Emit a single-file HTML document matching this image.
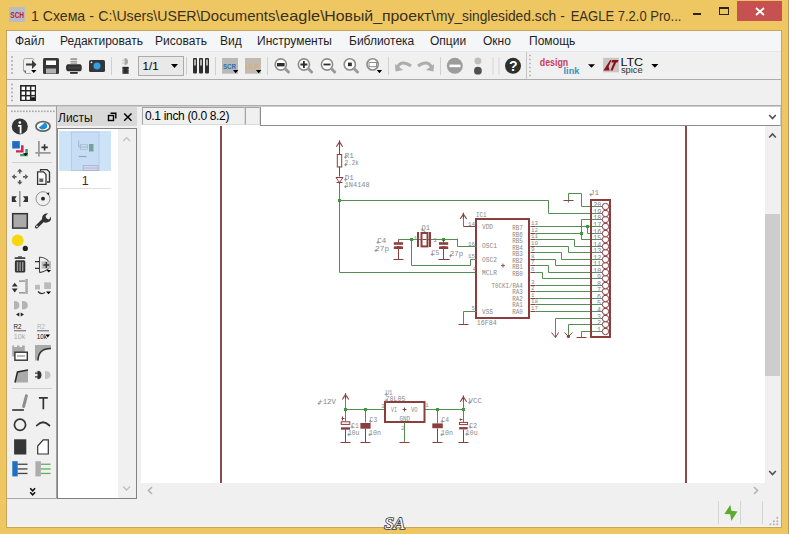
<!DOCTYPE html>
<html><head><meta charset="utf-8">
<style>
*{margin:0;padding:0;box-sizing:border-box}
html,body{width:789px;height:534px;overflow:hidden}
body{position:relative;background:#efc762;font-family:"Liberation Sans",sans-serif;color:#000}
.a{position:absolute}
#title{left:32px;top:6.7px;font-size:15px;color:#3a3020;white-space:nowrap;letter-spacing:-0.32px}
#menu{left:7px;top:31px;width:774px;height:21px;background:#f5f6f7;border-bottom:1px solid #e6e7e8}
.mi{position:absolute;font-size:12px;color:#1e1e1e;white-space:nowrap}
#tb1{left:7px;top:52px;width:774px;height:28px;background:#f0f0f0;border-bottom:1px solid #acacac}
#tb2{left:7px;top:80px;width:774px;height:26px;background:#f0f0f0;border-bottom:1px solid #acacac}
#main{left:7px;top:106px;width:774px;height:421px;background:#f0f0f0}
</style></head>
<body>
<div class="a" style="left:6px;top:30px;width:776px;height:498px;background:#c9a55a"></div>
<div class="a" id="menu">
</div>
<div class="a" id="tb1"></div>
<div class="a" id="tb2"></div>
<div class="a" id="main"></div>
<svg class="a" style="left:0;top:0" width="789" height="34" id="titlesvg"><text x="30.9" y="20.7" font-size="15" font-family="Liberation Sans" fill="#3a3020" textLength="66.9" lengthAdjust="spacingAndGlyphs" xml:space="preserve">1 Схема - </text><text x="98.3" y="20.7" font-size="15" font-family="Liberation Sans" fill="#3a3020" textLength="102.2" lengthAdjust="spacingAndGlyphs" xml:space="preserve">C:\Users\USER\</text><text x="200.1" y="20.7" font-size="15" font-family="Liberation Sans" fill="#3a3020" textLength="79.5" lengthAdjust="spacingAndGlyphs" xml:space="preserve">Documents\</text><text x="280.1" y="20.7" font-size="15" font-family="Liberation Sans" fill="#3a3020" textLength="44.6" lengthAdjust="spacingAndGlyphs" xml:space="preserve">eagle\</text><text x="324.2" y="20.7" font-size="15" font-family="Liberation Sans" fill="#3a3020" textLength="111.6" lengthAdjust="spacingAndGlyphs" xml:space="preserve">Новый_проект\</text><text x="436.1" y="20.7" font-size="15" font-family="Liberation Sans" fill="#3a3020" textLength="123.9" lengthAdjust="spacingAndGlyphs" xml:space="preserve">my_singlesided.sch </text><text x="560.3" y="20.7" font-size="15" font-family="Liberation Sans" fill="#3a3020" textLength="4.6" lengthAdjust="spacingAndGlyphs" xml:space="preserve">-</text><text x="570.7" y="20.7" font-size="15" font-family="Liberation Sans" fill="#3a3020" textLength="110.7" lengthAdjust="spacingAndGlyphs" xml:space="preserve">EAGLE 7.2.0 Pro...</text></svg>
<div class="a mi" style="left:15px;top:34px">Файл</div>
<div class="a mi" style="left:60px;top:34px">Редактировать</div>
<div class="a mi" style="left:155px;top:34px">Рисовать</div>
<div class="a mi" style="left:220px;top:34px">Вид</div>
<div class="a mi" style="left:257px;top:34px">Инструменты</div>
<div class="a mi" style="left:349px;top:34px">Библиотека</div>
<div class="a mi" style="left:430px;top:34px">Опции</div>
<div class="a mi" style="left:483px;top:34px">Окно</div>
<div class="a mi" style="left:529px;top:34px">Помощь</div>
<!-- sheets panel -->
<div class="a" style="left:57px;top:107px;width:80px;height:19px;background:#d9d9d9"></div>
<div class="a" style="left:58px;top:111px;font-size:12px;color:#111">Листы</div>
<div class="a" style="left:57px;top:128px;width:80px;height:371px;background:#fff;border:1px solid #828282"></div>
<div class="a" style="left:118px;top:129px;width:18px;height:369px;background:#f0f0f0"></div>
<!-- canvas -->
<div class="a" style="left:141px;top:125px;width:624px;height:358px;background:#fff"></div>
<!-- coord box -->
<div class="a" style="left:142px;top:107px;width:103px;height:18px;background:#f0f0f0;border:1px solid;border-color:#a4a4a4 #dcdcdc #dcdcdc #a4a4a4"></div>
<div class="a" style="left:145px;top:109px;font-size:12px;color:#000;letter-spacing:-0.33px">0.1 inch (0.0 8.2)</div>
<div class="a" style="left:245px;top:107px;width:15px;height:18px;background:#f0f0f0;border:1px solid;border-color:#a4a4a4 #dcdcdc #dcdcdc #a4a4a4"></div>
<div class="a" style="left:260px;top:106px;width:521px;height:20px;background:#fff;border:1px solid #8c8c8c;border-right:1px solid #d0d0d0"></div>


<svg class="a" style="left:0;top:0" width="789" height="534" viewBox="0 0 789 534">
<!-- title icon -->
<rect x="9" y="7" width="16" height="15" fill="#b9bcc3"/>
<text x="10.3" y="17.6" font-size="8.2" font-family="Liberation Sans" fill="#b8213c" textLength="13.8" lengthAdjust="spacingAndGlyphs" font-weight="bold">SCH</text>
<!-- window buttons -->
<rect x="693" y="13" width="8" height="2" fill="#2a2410"/>
<rect x="719.5" y="7.5" width="9" height="7" fill="none" stroke="#2a2410" stroke-width="1"/>
<rect x="719" y="7" width="10" height="2" fill="#2a2410"/>
<rect x="737" y="1" width="45" height="20" fill="#c75050"/>
<rect x="788" y="0" width="1" height="534" fill="#c49a48"/>
<path d="M756 8 L764 15 M764 8 L756 15" stroke="#fff" stroke-width="1.8"/>
<!-- grips -->
<g fill="#a0a0a0"><rect x="529.3" y="54.8" width="1.4" height="1.4"/><rect x="529.3" y="58.8" width="1.4" height="1.4"/><rect x="529.3" y="62.8" width="1.4" height="1.4"/><rect x="529.3" y="66.8" width="1.4" height="1.4"/><rect x="529.3" y="70.8" width="1.4" height="1.4"/><rect x="529.3" y="74.8" width="1.4" height="1.4"/><rect x="11.2" y="56.2" width="1.6" height="1.6"/><rect x="11.2" y="60.2" width="1.6" height="1.6"/><rect x="11.2" y="64.2" width="1.6" height="1.6"/><rect x="11.2" y="68.2" width="1.6" height="1.6"/><rect x="11.2" y="72.2" width="1.6" height="1.6"/><rect x="11.2" y="83.6" width="1.6" height="1.6"/><rect x="11.2" y="87.6" width="1.6" height="1.6"/><rect x="11.2" y="91.6" width="1.6" height="1.6"/><rect x="11.2" y="95.6" width="1.6" height="1.6"/><rect x="11.2" y="99.6" width="1.6" height="1.6"/></g>
<!-- export icon -->
<path d="M23.5 60.5 Q23.5 58.5 25.5 58.5 L32 58.5 Q34 58.5 34 60.5 M23.5 60.5 L23.5 71 L26 73.5 L31 73.5" fill="none" stroke="#a8a8a8" stroke-width="1"/>
<path d="M23.5 70.5 L26 73.5 L26 70.5 Z" fill="#666"/>
<path d="M26 63.5 L32 63.5 L32 60 L36.5 64.5 L32 69 L32 65.5 L26 65.5 Z" fill="#3a3a3a"/>
<path d="M31 70 L36.5 70 L33.75 73 Z" fill="#000"/>
<!-- save -->
<path d="M43 59.5 Q43 58 44.5 58 L57.5 58 Q59 58 59 59.5 L59 72.5 Q59 74 57.5 74 L44.5 74 Q43 74 43 72.5 Z" fill="#363636"/>
<rect x="46" y="60.5" width="10" height="4.5" fill="#fff"/>
<rect x="46" y="68.5" width="10" height="5" fill="#b0b0b0"/>
<!-- print -->
<rect x="70.5" y="58.3" width="6.6" height="1.5" fill="#8a8a8a"/>
<rect x="70.5" y="60.8" width="6.6" height="1.3" fill="#a0a0a0"/>
<rect x="70.5" y="62.6" width="6.6" height="1.1" fill="#8a8a8a"/>
<path d="M68 64.2 L80 64.2 Q81.8 64.5 81.8 67.7 Q81.8 71 80 71.3 L68 71.3 Q66 71 66 67.7 Q66 64.5 68 64.2 Z" fill="#2f2f2f"/>
<rect x="67.5" y="66.3" width="13" height="2.8" fill="#3e3e3e"/>
<rect x="70.1" y="72" width="7.6" height="1.8" fill="#2a2a2a"/>
<!-- camera -->
<rect x="89" y="60" width="16" height="12" rx="1.5" fill="#363636"/>
<circle cx="97" cy="66" r="4.2" fill="#1d5a80"/><circle cx="97" cy="66" r="3.3" fill="#3aa0dc"/>
<circle cx="91.5" cy="62.3" r="0.9" fill="#fff"/>
<!-- sep -->
<rect x="111" y="57" width="1" height="18" fill="#d0d0d0"/>
<!-- plug icon -->
<path d="M124.5 58 A3.5 3.5 0 0 1 124.5 65 Z" fill="#a8a8a8"/>
<rect x="122.2" y="59.6" width="2.6" height="1.2" fill="#c8c8c8"/><rect x="122.2" y="62.4" width="2.6" height="1.2" fill="#c8c8c8"/>
<rect x="122.4" y="66.8" width="6.3" height="7" fill="#2c2c2c"/>
<rect x="122.4" y="69.2" width="1" height="0.9" fill="#bbb"/><rect x="127.7" y="69.2" width="1" height="0.9" fill="#bbb"/>
<rect x="122.4" y="71.6" width="1" height="0.9" fill="#bbb"/><rect x="127.7" y="71.6" width="1" height="0.9" fill="#bbb"/>
<!-- combo -->
<rect x="138.5" y="56.5" width="45" height="19" fill="#e9e9e9" stroke="#acacac"/>
<text x="142.6" y="69.8" font-size="11.5" font-family="Liberation Sans" fill="#000">1/1</text>
<path d="M171 64 L178 64 L174.5 68 Z" fill="#000"/>
<rect x="186" y="57" width="1" height="18" fill="#d0d0d0"/>
<!-- 3 bars -->
<g fill="#2e2e2e">
<rect x="193" y="58" width="4" height="15.5" rx="1"/><rect x="199" y="58" width="4" height="15.5" rx="1"/><rect x="205" y="58" width="4" height="15.5" rx="1"/>
</g>
<g fill="#e8e8e8"><rect x="194.3" y="59.5" width="1.4" height="6"/><rect x="200.3" y="59.5" width="1.4" height="6"/><rect x="206.3" y="59.5" width="1.4" height="6"/></g>
<rect x="215" y="57" width="1" height="18" fill="#d0d0d0"/>
<!-- SCR -->
<rect x="222" y="58" width="16" height="15.7" fill="#b9b9b9"/>
<text x="223" y="68.8" font-size="7.6" font-weight="bold" font-family="Liberation Sans" fill="#2a6fae" textLength="13" lengthAdjust="spacingAndGlyphs">SCR</text>
<path d="M233 70 L238.3 70 L235.65 73.3 Z" fill="#000"/>
<!-- ULP -->
<rect x="245" y="58" width="16" height="15.7" fill="#c0bab0"/>
<text x="246" y="68.8" font-size="7.6" font-family="Liberation Sans" fill="#f2aa48" textLength="13" lengthAdjust="spacingAndGlyphs" opacity="0.8">ULP</text>
<path d="M256 70 L261.3 70 L258.65 73.3 Z" fill="#000"/>
<rect x="267" y="57" width="1" height="18" fill="#d0d0d0"/>
<!-- zooms -->
<g fill="none" stroke="#8c8c8c" stroke-width="1.6">
<circle cx="280.8" cy="64.5" r="5.6" fill="#fff"/><circle cx="303.9" cy="64.5" r="5.6" fill="#fff"/><circle cx="327" cy="64.5" r="5.6" fill="#fff"/><circle cx="349.8" cy="64.4" r="5.6" fill="#fff"/><circle cx="372.6" cy="64.4" r="5.6" fill="#fff"/>
</g>
<g stroke="#9a9a9a" stroke-width="3" stroke-linecap="round">
<path d="M285.5 69 L288.5 72"/><path d="M308.6 69 L311.6 72"/><path d="M331.7 69 L334.7 72"/><path d="M354.5 69 L357.5 72"/>
</g>
<rect x="277" y="63" width="7.6" height="3.4" fill="#2e2e2e"/>
<path d="M303.9 61 L303.9 68 M300.4 64.5 L307.4 64.5" stroke="#2e2e2e" stroke-width="1.8"/>
<path d="M323.5 64.5 L330.5 64.5" stroke="#2e2e2e" stroke-width="1.8"/>
<rect x="348" y="62.6" width="3.8" height="3.6" fill="#2e2e2e"/>
<rect x="369" y="62.5" width="7.5" height="4.2" fill="none" stroke="#8c8c8c" stroke-width="1"/>
<path d="M376.8 70 L382.1 70 L379.45 73.3 Z" fill="#000"/>
<rect x="388" y="57" width="1" height="18" fill="#d0d0d0"/>
<!-- undo redo -->
<path d="M397 68 Q401 59 411 66" fill="none" stroke="#adadad" stroke-width="3"/>
<path d="M395 64 L395.5 71.5 L403 70 Z" fill="#adadad"/>
<path d="M432 68 Q428 59 418 66" fill="none" stroke="#adadad" stroke-width="3"/>
<path d="M434 64 L433.5 71.5 L426 70 Z" fill="#adadad"/>
<rect x="440" y="57" width="1" height="18" fill="#d0d0d0"/>
<!-- stop go -->
<circle cx="454.8" cy="65.8" r="8" fill="#9c9c9c"/>
<rect x="449.5" y="64.6" width="11" height="2.6" fill="#fff"/>
<circle cx="477.9" cy="61" r="3.4" fill="#bdbdbd"/>
<circle cx="477.9" cy="70.7" r="3.9" fill="#505050"/>
<rect x="492.5" y="57" width="1" height="18" fill="#d6d6d6"/>
<rect x="498.5" y="57" width="1" height="18" fill="#d6d6d6"/>
<!-- help -->
<circle cx="513" cy="65.8" r="8" fill="#2e2e2e"/>
<text x="513.2" y="71" font-size="14" font-weight="bold" font-family="Liberation Sans" fill="#fff" text-anchor="middle">?</text>
<rect x="526" y="52" width="1" height="27" fill="#c4c4c4"/>
<!-- design link -->
<text x="539.8" y="65.7" font-size="10.5" font-weight="bold" font-family="Liberation Sans" fill="#c83a62" textLength="28.4" lengthAdjust="spacingAndGlyphs">design</text>
<text x="563.6" y="73.8" font-size="9.5" font-weight="bold" font-family="Liberation Sans" fill="#3592bd" textLength="15.7" lengthAdjust="spacingAndGlyphs">link</text>
<path d="M588 64.2 L595 64.2 L591.5 67.8 Z" fill="#000"/>
<!-- LTC -->
<rect x="603.1" y="57.8" width="15.8" height="14.5" fill="#c9c5c5"/>
<path d="M603.4 70.6 L610.2 60 L611.6 60 L608.6 66.5 L609.6 70.6 Z" fill="#8c1119"/><path d="M612.2 59.9 L618.6 59.9 L617.6 62.5 L616.2 62.5 L612.6 70.6 L610.4 70.6 L613.8 62.5 L611.4 62.5 Z" fill="#8c1119"/>
<text x="620.4" y="65.8" font-size="11.2" font-family="Liberation Sans" fill="#111" textLength="22.8" lengthAdjust="spacingAndGlyphs">LTC</text>
<text x="620.9" y="72.6" font-size="8.5" font-family="Liberation Sans" fill="#333" textLength="21.8" lengthAdjust="spacingAndGlyphs">spice</text>
<path d="M651.3 64 L658.4 64 L654.85 67.7 Z" fill="#000"/>
<!-- grid icon tb2 -->
<rect x="20" y="85" width="16" height="16" fill="#262626"/>
<path d="M31 97.2 L35.4 97.2 L33.6 99.5 Z" fill="#000"/>
<g fill="#fff">
<rect x="21.6" y="86.6" width="3.4" height="3.4"/><rect x="26.5" y="86.6" width="3.4" height="3.4"/><rect x="31.4" y="86.6" width="3.4" height="3.4"/>
<rect x="21.6" y="91.5" width="3.4" height="3.4"/><rect x="26.5" y="91.5" width="3.4" height="3.4"/><rect x="31.4" y="91.5" width="3.4" height="3.4"/>
<rect x="21.6" y="96.4" width="3.4" height="3.4"/><rect x="26.5" y="96.4" width="3.4" height="3.4"/><rect x="31.4" y="96.4" width="3.4" height="0.9"/>
</g>
</svg>

<svg class="a" style="left:0;top:0" width="789" height="534" viewBox="0 0 789 534">
<rect x="7" y="106" width="774" height="1" fill="#cdcdcd"/>
<!-- left panel border -->
<rect x="56" y="106" width="1" height="393" fill="#a0a0a0"/>
<rect x="7" y="498" width="50" height="1" fill="#a8a8a8"/>
<!-- left toolbar grip -->
<g fill="#a6a6a6"><rect x="11" y="110.5" width="1.6" height="1.6"/><rect x="14" y="110.5" width="1.6" height="1.6"/><rect x="17" y="110.5" width="1.6" height="1.6"/><rect x="20" y="110.5" width="1.6" height="1.6"/><rect x="23" y="110.5" width="1.6" height="1.6"/><rect x="26" y="110.5" width="1.6" height="1.6"/><rect x="29" y="110.5" width="1.6" height="1.6"/><rect x="32" y="110.5" width="1.6" height="1.6"/><rect x="35" y="110.5" width="1.6" height="1.6"/><rect x="38" y="110.5" width="1.6" height="1.6"/><rect x="41" y="110.5" width="1.6" height="1.6"/><rect x="44" y="110.5" width="1.6" height="1.6"/><rect x="47" y="110.5" width="1.6" height="1.6"/><rect x="50" y="110.5" width="1.6" height="1.6"/><rect x="53" y="110.5" width="1.6" height="1.6"/></g>
<!-- sheets header icons -->
<rect x="108.5" y="115.5" width="5" height="5" fill="none" stroke="#000" stroke-width="1.4"/>
<path d="M110.5 113.2 L115.8 113.2 L115.8 118.5" fill="none" stroke="#000" stroke-width="1.4"/>
<path d="M124.2 113.5 L131.5 120.8 M131.5 113.5 L124.2 120.8" stroke="#000" stroke-width="1.5"/>
<!-- thumbnail -->
<rect x="59" y="131" width="52" height="40" fill="#cce3f8"/>
<rect x="71.5" y="132" width="27.5" height="38.7" fill="#c6ddf5" stroke="#a9c3de" stroke-width="0.7"/>
<path d="M78.7 140.5 L78.7 147 L88 147" stroke="#8aa8b0" stroke-width="0.7" fill="none"/>
<rect x="80.5" y="144.5" width="7" height="5" fill="none" stroke="#a0b8c0" stroke-width="0.6"/>
<rect x="89" y="144" width="4.5" height="7.5" fill="#7aa09a"/>
<path d="M78.7 156.5 L86.5 156.5" stroke="#90a8b0" stroke-width="1.2"/>
<rect x="83.2" y="165.5" width="14.8" height="5" fill="none" stroke="#b8a8c0" stroke-width="0.8"/>
<path d="M83.2 168 L98 168" stroke="#c0a8c8" stroke-width="0.8"/>
<text x="85.3" y="185" font-size="12.5" font-family="Liberation Sans" fill="#5a1d1d" text-anchor="middle">1</text>
<rect x="59" y="188" width="52" height="1" fill="#e0e0e0"/>
<path d="M123.2 141 L126.6 137.6 L130 141" fill="none" stroke="#c0c0c0" stroke-width="1.3"/>
<path d="M123.2 486.5 L126.6 490 L130 486.5" fill="none" stroke="#c0c0c0" stroke-width="1.3"/>
<!-- canvas frame lines -->
<rect x="220" y="126" width="2" height="357" fill="#8c4a4a"/>
<rect x="685" y="126" width="2" height="357" fill="#8c4a4a"/>
<!-- vscroll -->
<rect x="765" y="126" width="15" height="357" fill="#f0f0f0"/>
<rect x="765" y="214" width="15" height="162" fill="#cdcdcd"/>
<path d="M769.2 137.5 L772.5 134 L775.8 137.5" fill="none" stroke="#505050" stroke-width="1.6"/>
<path d="M769.2 471 L772.5 474.5 L775.8 471" fill="none" stroke="#505050" stroke-width="1.6"/>
<path d="M769.2 115 L772.5 118.5 L775.8 115" fill="none" stroke="#505050" stroke-width="1.6"/>
<!-- hscroll -->
<path d="M152 487 L148.5 490.5 L152 494" fill="none" stroke="#b4b4b4" stroke-width="1.6"/>
<path d="M754 487 L757.5 490.5 L754 494" fill="none" stroke="#b4b4b4" stroke-width="1.6"/>
<!-- status bar -->
<rect x="718" y="501" width="1" height="23" fill="#d4d4d4"/>
<rect x="740" y="501" width="1" height="23" fill="#d4d4d4"/>
<rect x="762" y="501" width="1" height="23" fill="#d4d4d4"/>
<path d="M730.3 504.8 L724.4 514.1 L730.2 514.3 L731.3 521 L737.4 511.4 L731.4 510.8 Z" fill="#5cab30"/>
<g fill="#a8a8a8"><rect x="776.5" y="517" width="1.6" height="1.6"/><rect x="773" y="520.5" width="1.6" height="1.6"/><rect x="776.5" y="520.5" width="1.6" height="1.6"/><rect x="769.5" y="523.5" width="1.6" height="1.6"/><rect x="773" y="523.5" width="1.6" height="1.6"/><rect x="776.5" y="523.5" width="1.6" height="1.6"/></g>
<rect x="7" y="526" width="774" height="1" fill="#f8f4ea"/>
</svg>


<svg class="a" style="left:0;top:0" width="789" height="534" viewBox="0 0 789 534">
<!-- info -->
<circle cx="19.8" cy="126.4" r="8" fill="#333"/>
<circle cx="19.8" cy="122.6" r="1.3" fill="#fff"/>
<path d="M18 125.8 L20.6 125.8 L20.6 133.5" stroke="#fff" stroke-width="1.8" fill="none"/>
<!-- eye -->
<ellipse cx="43" cy="126.4" rx="7" ry="4.7" fill="#fff" stroke="#666" stroke-width="1.8"/>
<path d="M38.8 127 Q40.5 126.5 42 125 Q43.5 123 45.5 122.8 Q48 124.5 47 127.5 Q44.5 130.2 41 129.3 Q39.2 128.6 38.8 127 Z" fill="#1c8fd8"/>
<!-- layers -->
<rect x="12.2" y="141.1" width="7.6" height="7.4" fill="#1e6bc0"/>
<path d="M21 145.3 L23.6 145.3 L23.6 152.5 L16 152.5 L16 150.3 L21 150.3 Z" fill="#d0245a"/>
<path d="M25.3 149 L27.8 149 L27.8 156.3 L20.2 156.3 L20.2 154 L25.3 154 Z" fill="#3a9a6a"/>
<path d="M23 153.2 L28 153.2 L25.5 156 Z" fill="#000"/>
<!-- mark -->
<rect x="38" y="141" width="1.8" height="15.5" fill="#999"/>
<rect x="35.4" y="152" width="15.2" height="1.8" fill="#999"/>
<path d="M44.6 144.2 L44.6 150.6 M41.4 147.4 L47.8 147.4" stroke="#333" stroke-width="1.6"/>
<!-- sep -->
<rect x="12" y="162" width="40" height="1" fill="#d0d0d0"/>
<!-- move -->
<g fill="#555">
<path d="M19.8 168.8 L22.5 171.8 L17.1 171.8 Z M19.8 184.8 L22.5 181.8 L17.1 181.8 Z M11.8 176.8 L14.8 174.1 L14.8 179.5 Z M28.2 176.8 L25.2 174.1 L25.2 179.5 Z"/>
<rect x="19" y="171.5" width="1.6" height="2"/><rect x="19" y="180" width="1.6" height="2"/><rect x="14.5" y="176" width="2" height="1.6"/><rect x="23" y="176" width="2" height="1.6"/>
</g>
<!-- copy -->
<path d="M40.5 171 L40.5 169.6 L47 169.6 L49.5 172 L49.5 182 L47 182" fill="none" stroke="#333" stroke-width="1.3"/>
<path d="M37.6 171.9 L43.5 171.9 L46 174.4 L46 184.3 L37.6 184.3 Z" fill="#fff" stroke="#333" stroke-width="1.3"/>
<rect x="39.3" y="178.5" width="4" height="3.6" fill="#666"/>
<!-- mirror -->
<rect x="19" y="191" width="1.6" height="15.8" fill="#999"/>
<path d="M11.8 196.2 L16.8 196.2 L14.8 199.1 L16.8 202 L11.8 202 Z" fill="#333"/>
<path d="M28 196.2 L23 196.2 L25 199.1 L23 202 L28 202 Z" fill="#333"/>
<!-- rotate -->
<circle cx="43" cy="198.7" r="7" fill="none" stroke="#888" stroke-width="0.9"/>
<circle cx="43" cy="198.7" r="1.9" fill="#222"/>
<path d="M46.5 193 L49.5 192.5 L48.5 195.5 Z" fill="#222"/>
<!-- change -->
<rect x="12.7" y="213.7" width="14.6" height="14.4" fill="#aaa" stroke="#333" stroke-width="1.5"/>
<!-- wrench -->
<path d="M36.5 226.8 L44 219.5" stroke="#333" stroke-width="3.2" stroke-linecap="round"/>
<path d="M42.5 221 Q41 216 44.5 214 Q46.5 213 48 213.2 L45.5 216 L46.5 218.5 L49 219.5 L51 216.5 Q51.5 220 49.5 221.5 Q47 223 44.5 222.5 Z" fill="#333"/>
<circle cx="37" cy="226.4" r="0.8" fill="#fff"/>
<!-- yellow -->
<circle cx="17.7" cy="240.4" r="5.9" fill="#f6d60c"/>
<circle cx="25.3" cy="248.4" r="2.6" fill="#222"/>
<!-- trash -->
<rect x="14.7" y="257.2" width="10.6" height="1.8" fill="#444"/>
<rect x="18" y="256.3" width="4" height="1.2" fill="#444"/>
<rect x="14.9" y="260.2" width="10.4" height="12.4" rx="1.5" fill="#333"/>
<rect x="16.8" y="262" width="1.4" height="9" fill="#999"/><rect x="19.4" y="262" width="1.4" height="9" fill="#999"/><rect x="22" y="262" width="1.4" height="9" fill="#999"/>
<!-- add -->
<path d="M39.5 257 L39.5 272.6 M39.5 257 Q49 258 50 265" fill="none" stroke="#444" stroke-width="1.1"/>
<path d="M39.5 272.6 Q47 271 49 268" fill="none" stroke="#444" stroke-width="1.1"/>
<path d="M35 261.7 L39.5 261.7 M35 268.4 L39.5 268.4" stroke="#333" stroke-width="1.3"/>
<rect x="41.7" y="261.3" width="9.3" height="7.5" fill="#bbb"/>
<path d="M46.3 262 L46.3 268 M43.3 265 L49.3 265" stroke="#333" stroke-width="1.5"/>
<path d="M46.5 270 L51 270 L48.75 272.6 Z" fill="#000"/>
<!-- pinswap -->
<path d="M14.75 282.7 L17.7 286.5 L11.8 286.5 Z M14.75 292.5 L17.7 288.5 L11.8 288.5 Z" fill="#333"/>
<rect x="19" y="280.3" width="6" height="1.6" fill="#999"/><rect x="19" y="292" width="6" height="1.6" fill="#999"/>
<rect x="25.3" y="279" width="2.5" height="15" fill="#aaa"/>
<!-- gateswap2 -->
<rect x="35" y="284.8" width="5" height="4.7" fill="#bbb"/>
<rect x="44.2" y="282.3" width="6.8" height="6.7" fill="#bbb"/>
<path d="M38 291.5 Q41 295 45 292.5" fill="none" stroke="#333" stroke-width="1.2"/>
<path d="M46 291.5 L51 291.5 L48.5 294.3 Z" fill="#000"/>
<!-- gate swap light -->
<path d="M14 301 Q19.4 301 19.4 305.2 Q19.4 309.5 14 309.5 Z M22 301 Q27.8 301 27.8 305.2 Q27.8 309.5 22 309.5 Z" fill="#b4b4b4"/>
<path d="M19.3 312.4 L16 314.5 L19.3 316.6 Z M20.7 312.4 L24 314.5 L20.7 316.6 Z" fill="#222"/>
<!-- name/value -->
<text x="13.5" y="328.6" font-size="7" font-family="Liberation Sans" fill="#222" textLength="8" lengthAdjust="spacingAndGlyphs">R2</text>
<rect x="14" y="330" width="12" height="1.4" fill="#888"/>
<text x="13.8" y="338.6" font-size="7.5" font-family="Liberation Sans" fill="#aaa" textLength="11.5" lengthAdjust="spacingAndGlyphs">10k</text>
<text x="37" y="328.6" font-size="7" font-family="Liberation Sans" fill="#b0b0b0" textLength="8" lengthAdjust="spacingAndGlyphs">R2</text>
<rect x="37" y="330" width="12" height="1.4" fill="#888"/>
<text x="36.8" y="338.6" font-size="7.5" font-family="Liberation Sans" fill="#111" textLength="10" lengthAdjust="spacingAndGlyphs">10k</text>
<path d="M45.5 334.5 L50 334.5 L47.75 337.6 Z" fill="#000"/>
<!-- smash -->
<path d="M12.2 356.4 L12.2 345.5 L14 345.5 L14 347 L17 347 L17 345.5 L19.5 345.5 L19.5 347 L22 347 L22 345.5 L24.8 345.5 L24.8 356.4 Z" fill="#aaa"/>
<rect x="14.9" y="352.2" width="12.4" height="8" fill="#fff" stroke="#333" stroke-width="1.4"/>
<rect x="17" y="355" width="8" height="2" fill="#bbb"/>
<!-- miter -->
<path d="M35 345 L51 345 L51 348.5 Q38 348.5 38 360.6 L35 360.6 Z" fill="#aaa"/>
<path d="M38 360.6 Q38 348.5 51 348.5" fill="none" stroke="#333" stroke-width="1.5"/>
<!-- split -->
<path d="M15 382.5 L17.5 372 L28 370 L28 382.5 Z" fill="#aaa"/>
<path d="M15 382.5 L17.5 372 L28 370" fill="none" stroke="#2a2a2a" stroke-width="1.5"/>
<!-- optimize -->
<path d="M37.5 370.7 Q41.5 370.7 41.5 375 Q41.5 379.2 37.5 379.2 Z" fill="#333"/>
<rect x="35" y="372.5" width="3" height="1.2" fill="#333"/><rect x="35" y="376.3" width="3" height="1.2" fill="#333"/>
<path d="M45 371 Q50.5 371 50.5 375 Q50.5 379 45 379 Z" fill="#c4c4c4"/>
<!-- sep -->
<rect x="12" y="388" width="40" height="1" fill="#d0d0d0"/>
<!-- wire -->
<rect x="12.2" y="409.2" width="11.7" height="1.6" fill="#333"/>
<path d="M23.6 406.5 L26.4 395.8" stroke="#8e8e8e" stroke-width="3" stroke-linecap="round"/>
<!-- T -->
<path d="M38.9 397.8 L47.8 397.8 M43.35 397.8 L43.35 409.3" stroke="#333" stroke-width="1.7"/>
<!-- circle arc -->
<circle cx="20" cy="424.8" r="5.6" fill="none" stroke="#333" stroke-width="1.7"/>
<path d="M36.8 425.5 Q43 419 49.4 425.5" fill="none" stroke="#333" stroke-width="1.8" stroke-linecap="round"/>
<!-- rect polygon -->
<rect x="14.1" y="439.3" width="12.2" height="15.2" fill="#363636"/>
<path d="M37.7 454 L37.7 446 L43.2 439.8 L48.3 439.8 L48.3 454 Z" fill="#fff" stroke="#333" stroke-width="1.2"/>
<!-- bus net -->
<rect x="12.3" y="461.2" width="5.4" height="15.2" fill="#1e70c0"/>
<g fill="#444"><rect x="17.7" y="463.6" width="9.8" height="1.3"/><rect x="17.7" y="468.3" width="9.8" height="1.3"/><rect x="17.7" y="472.8" width="9.8" height="1.3"/></g>
<rect x="35.4" y="461.2" width="5.5" height="15.2" fill="#adadad"/>
<g fill="#5ab45a"><rect x="40.9" y="463.6" width="9.7" height="1.3"/><rect x="40.9" y="468.3" width="9.7" height="1.3"/><rect x="40.9" y="472.8" width="9.7" height="1.3"/></g>
<!-- chevron -->
<path d="M30.2 488.3 L32.65 490.8 L35.1 488.3 M30.2 492.3 L32.65 494.8 L35.1 492.3" fill="none" stroke="#111" stroke-width="1.6"/>
</svg>
<!--SCH--><svg class="a" style="left:0;top:0" width="789" height="534" viewBox="0 0 789 534">
<path d="M339.5 140.5 L341.3 144.0 L337.7 144.0 Z" fill="#8c3e3e"/>
<path d="M336.3 146.8 L338.3 143.7" fill="none" stroke="#8c3e3e" stroke-width="1.1"/>
<path d="M342.7 146.8 L340.7 143.7" fill="none" stroke="#8c3e3e" stroke-width="1.1"/>
<path d="M339.5 140.5 L339.5 147.0" fill="none" stroke="#8c3e3e" stroke-width="1.1"/>
<path d="M339.5 140.5 L339.5 154.5" fill="none" stroke="#8c3e3e" stroke-width="1"/>
<rect x="337.3" y="154.5" width="4.4" height="12.5" fill="none" stroke="#8c3e3e" stroke-width="1"/>
<path d="M339.5 166.5 L339.5 176.5" fill="none" stroke="#8c3e3e" stroke-width="1"/>
<path d="M336 177.5 L343 177.5 L339.5 182.5 Z" fill="none" stroke="#8c3e3e" stroke-width="1"/>
<path d="M336.5 182.5 L342.5 182.5" fill="none" stroke="#8c3e3e" stroke-width="1"/>
<path d="M339.5 182.5 L339.5 184.5" fill="none" stroke="#8c3e3e" stroke-width="1"/>
<path d="M344.0 157.3 L347.0 157.3 M345.5 155.8 L345.5 158.8" stroke="#9a9a9a" stroke-width="0.9"/>
<text x="344.7" y="157.8" font-size="6.5" font-family="Liberation Mono" fill="#888888" textLength="9" lengthAdjust="spacingAndGlyphs">R1</text>
<path d="M344.0 164.8 L347.0 164.8 M345.5 163.3 L345.5 166.3" stroke="#9a9a9a" stroke-width="0.9"/>
<text x="344.7" y="165.3" font-size="6.5" font-family="Liberation Mono" fill="#888888" textLength="14" lengthAdjust="spacingAndGlyphs">2.2k</text>
<path d="M344.0 179.7 L347.0 179.7 M345.5 178.2 L345.5 181.2" stroke="#9a9a9a" stroke-width="0.9"/>
<text x="344.7" y="180.2" font-size="6.5" font-family="Liberation Mono" fill="#888888" textLength="9" lengthAdjust="spacingAndGlyphs">D1</text>
<path d="M344.0 186.7 L347.0 186.7 M345.5 185.2 L345.5 188.2" stroke="#9a9a9a" stroke-width="0.9"/>
<text x="344.7" y="187.2" font-size="6.5" font-family="Liberation Mono" fill="#888888" textLength="25" lengthAdjust="spacingAndGlyphs">1N4148</text>
<path d="M339.5 184.5 L339.5 272.5 L476.5 272.5" fill="none" stroke="#558d55" stroke-width="1"/>
<rect x="338.0" y="199.0" width="3" height="3" fill="#3a9a3a"/>
<path d="M339.5 200.5 L548.5 200.5 L548.5 213.5 L602.5 213.5" fill="none" stroke="#558d55" stroke-width="1"/>
<rect x="476" y="219" width="53" height="99" fill="none" stroke="#8c3e3e" stroke-width="2"/>
<path d="M463.4 212.7 L465.2 216.2 L461.59999999999997 216.2 Z" fill="#8c3e3e"/>
<path d="M460.2 219.0 L462.2 215.89999999999998" fill="none" stroke="#8c3e3e" stroke-width="1.1"/>
<path d="M466.59999999999997 219.0 L464.59999999999997 215.89999999999998" fill="none" stroke="#8c3e3e" stroke-width="1.1"/>
<path d="M463.4 212.7 L463.4 219.2" fill="none" stroke="#8c3e3e" stroke-width="1.1"/>
<path d="M463.5 218.5 L463.5 226.5" fill="none" stroke="#558d55" stroke-width="1"/>
<path d="M463.5 226.5 L476.5 226.5" fill="none" stroke="#8c3e3e" stroke-width="1"/>
<text x="467.9" y="226.2" font-size="5.5" font-family="Liberation Mono" fill="#888888" textLength="7" lengthAdjust="spacingAndGlyphs">14</text>
<text x="476" y="217" font-size="6.5" font-family="Liberation Mono" fill="#888888" textLength="10.5" lengthAdjust="spacingAndGlyphs">IC1</text>
<text x="482" y="229.4" font-size="6.5" font-family="Liberation Mono" fill="#888888" textLength="11" lengthAdjust="spacingAndGlyphs">VDD</text>
<text x="482" y="248.3" font-size="6.5" font-family="Liberation Mono" fill="#888888" textLength="15" lengthAdjust="spacingAndGlyphs">OSC1</text>
<text x="482" y="261.5" font-size="6.5" font-family="Liberation Mono" fill="#888888" textLength="15" lengthAdjust="spacingAndGlyphs">OSC2</text>
<text x="482" y="274.6" font-size="6.5" font-family="Liberation Mono" fill="#888888" textLength="15" lengthAdjust="spacingAndGlyphs">MCLR</text>
<text x="482" y="314.4" font-size="6.5" font-family="Liberation Mono" fill="#888888" textLength="11" lengthAdjust="spacingAndGlyphs">VSS</text>
<text x="476.7" y="325" font-size="6.5" font-family="Liberation Mono" fill="#888888" textLength="20" lengthAdjust="spacingAndGlyphs">16F84</text>
<path d="M501 265.6 L505 265.6" fill="none" stroke="#8c3e3e" stroke-width="0.9"/>
<path d="M503 263.6 L503 267.6" fill="none" stroke="#8c3e3e" stroke-width="0.9"/>
<path d="M457.5 238.5 L457.5 246.5 L476.5 246.5" fill="none" stroke="#558d55" stroke-width="1"/>
<text x="467.9" y="245.8" font-size="5.5" font-family="Liberation Mono" fill="#888888" textLength="7" lengthAdjust="spacingAndGlyphs">16</text>
<path d="M411.5 265.5 L470.5 265.5 L470.5 259.5 L476.5 259.5" fill="none" stroke="#558d55" stroke-width="1"/>
<text x="467.9" y="257.6" font-size="5.5" font-family="Liberation Mono" fill="#888888" textLength="7" lengthAdjust="spacingAndGlyphs">15</text>
<text x="472.5" y="271.2" font-size="5.5" font-family="Liberation Mono" fill="#888888" textLength="3.5" lengthAdjust="spacingAndGlyphs">4</text>
<path d="M476.5 311.5 L463.5 311.5 L463.5 324.5" fill="none" stroke="#558d55" stroke-width="1"/>
<path d="M458.5 324.5 L468.5 324.5" fill="none" stroke="#8c3e3e" stroke-width="1"/>
<text x="471.5" y="310" font-size="5.5" font-family="Liberation Mono" fill="#888888" textLength="3.5" lengthAdjust="spacingAndGlyphs">5</text>
<text x="512.2" y="229.5" font-size="6.5" font-family="Liberation Mono" fill="#888888" textLength="10.6" lengthAdjust="spacingAndGlyphs">RB7</text>
<text x="531" y="225.2" font-size="5.5" font-family="Liberation Mono" fill="#888888" textLength="7" lengthAdjust="spacingAndGlyphs">13</text>
<text x="512.2" y="236.5" font-size="6.5" font-family="Liberation Mono" fill="#888888" textLength="10.6" lengthAdjust="spacingAndGlyphs">RB6</text>
<text x="531" y="232.2" font-size="5.5" font-family="Liberation Mono" fill="#888888" textLength="7" lengthAdjust="spacingAndGlyphs">12</text>
<text x="512.2" y="242.5" font-size="6.5" font-family="Liberation Mono" fill="#888888" textLength="10.6" lengthAdjust="spacingAndGlyphs">RB5</text>
<text x="531" y="238.2" font-size="5.5" font-family="Liberation Mono" fill="#888888" textLength="7" lengthAdjust="spacingAndGlyphs">11</text>
<text x="512.2" y="249.5" font-size="6.5" font-family="Liberation Mono" fill="#888888" textLength="10.6" lengthAdjust="spacingAndGlyphs">RB4</text>
<text x="531" y="245.2" font-size="5.5" font-family="Liberation Mono" fill="#888888" textLength="7" lengthAdjust="spacingAndGlyphs">10</text>
<text x="512.2" y="255.5" font-size="6.5" font-family="Liberation Mono" fill="#888888" textLength="10.6" lengthAdjust="spacingAndGlyphs">RB3</text>
<text x="531" y="251.2" font-size="5.5" font-family="Liberation Mono" fill="#888888" textLength="3.5" lengthAdjust="spacingAndGlyphs">9</text>
<text x="512.2" y="262.5" font-size="6.5" font-family="Liberation Mono" fill="#888888" textLength="10.6" lengthAdjust="spacingAndGlyphs">RB2</text>
<text x="531" y="258.2" font-size="5.5" font-family="Liberation Mono" fill="#888888" textLength="3.5" lengthAdjust="spacingAndGlyphs">8</text>
<text x="512.2" y="268.5" font-size="6.5" font-family="Liberation Mono" fill="#888888" textLength="10.6" lengthAdjust="spacingAndGlyphs">RB1</text>
<text x="531" y="264.2" font-size="5.5" font-family="Liberation Mono" fill="#888888" textLength="3.5" lengthAdjust="spacingAndGlyphs">7</text>
<text x="512.2" y="275.5" font-size="6.5" font-family="Liberation Mono" fill="#888888" textLength="10.6" lengthAdjust="spacingAndGlyphs">RB0</text>
<text x="531" y="271.2" font-size="5.5" font-family="Liberation Mono" fill="#888888" textLength="3.5" lengthAdjust="spacingAndGlyphs">6</text>
<text x="491.6" y="287.9" font-size="6.5" font-family="Liberation Mono" fill="#888888" textLength="31.2" lengthAdjust="spacingAndGlyphs">T0CKI/RA4</text>
<text x="531" y="284.2" font-size="5.5" font-family="Liberation Mono" fill="#888888" textLength="3.5" lengthAdjust="spacingAndGlyphs">3</text>
<text x="512.2" y="293.9" font-size="6.5" font-family="Liberation Mono" fill="#888888" textLength="10.6" lengthAdjust="spacingAndGlyphs">RA3</text>
<text x="531" y="290.2" font-size="5.5" font-family="Liberation Mono" fill="#888888" textLength="3.5" lengthAdjust="spacingAndGlyphs">2</text>
<text x="512.2" y="300.9" font-size="6.5" font-family="Liberation Mono" fill="#888888" textLength="10.6" lengthAdjust="spacingAndGlyphs">RA2</text>
<text x="531" y="297.2" font-size="5.5" font-family="Liberation Mono" fill="#888888" textLength="3.5" lengthAdjust="spacingAndGlyphs">1</text>
<text x="512.2" y="306.9" font-size="6.5" font-family="Liberation Mono" fill="#888888" textLength="10.6" lengthAdjust="spacingAndGlyphs">RA1</text>
<text x="531" y="303.2" font-size="5.5" font-family="Liberation Mono" fill="#888888" textLength="7" lengthAdjust="spacingAndGlyphs">18</text>
<text x="512.2" y="313.9" font-size="6.5" font-family="Liberation Mono" fill="#888888" textLength="10.6" lengthAdjust="spacingAndGlyphs">RA0</text>
<text x="531" y="310.2" font-size="5.5" font-family="Liberation Mono" fill="#888888" textLength="7" lengthAdjust="spacingAndGlyphs">17</text>
<path d="M530.5 226.5 L535.5 226.5" fill="none" stroke="#8c3e3e" stroke-width="1"/>
<path d="M530.5 233.5 L535.5 233.5" fill="none" stroke="#8c3e3e" stroke-width="1"/>
<path d="M530.5 239.5 L535.5 239.5" fill="none" stroke="#8c3e3e" stroke-width="1"/>
<path d="M530.5 246.5 L535.5 246.5" fill="none" stroke="#8c3e3e" stroke-width="1"/>
<path d="M530.5 252.5 L535.5 252.5" fill="none" stroke="#8c3e3e" stroke-width="1"/>
<path d="M530.5 259.5 L535.5 259.5" fill="none" stroke="#8c3e3e" stroke-width="1"/>
<path d="M530.5 265.5 L535.5 265.5" fill="none" stroke="#8c3e3e" stroke-width="1"/>
<path d="M530.5 272.5 L535.5 272.5" fill="none" stroke="#8c3e3e" stroke-width="1"/>
<path d="M535.5 226.5 L602.5 226.5" fill="none" stroke="#558d55" stroke-width="1"/>
<rect x="586.0" y="225.0" width="3" height="3" fill="#3a9a3a"/>
<path d="M587.5 226.5 L587.5 233.5 L602.5 233.5" fill="none" stroke="#558d55" stroke-width="1"/>
<path d="M535.5 233.5 L581.5 233.5" fill="none" stroke="#558d55" stroke-width="1"/>
<rect x="580.0" y="232.0" width="3" height="3" fill="#3a9a3a"/>
<path d="M602.5 219.5 L581.5 219.5 L581.5 239.5 L602.5 239.5" fill="none" stroke="#558d55" stroke-width="1"/>
<path d="M535.5 239.5 L574.5 239.5 L574.5 246.5 L602.5 246.5" fill="none" stroke="#558d55" stroke-width="1"/>
<path d="M535.5 246.5 L568.5 246.5 L568.5 252.5 L602.5 252.5" fill="none" stroke="#558d55" stroke-width="1"/>
<path d="M535.5 252.5 L561.5 252.5 L561.5 259.5 L602.5 259.5" fill="none" stroke="#558d55" stroke-width="1"/>
<path d="M535.5 259.5 L555.5 259.5 L555.5 265.5 L602.5 265.5" fill="none" stroke="#558d55" stroke-width="1"/>
<path d="M535.5 265.5 L548.5 265.5 L548.5 272.5 L602.5 272.5" fill="none" stroke="#558d55" stroke-width="1"/>
<path d="M535.5 272.5 L542.5 272.5 L542.5 278.5 L602.5 278.5" fill="none" stroke="#558d55" stroke-width="1"/>
<path d="M530.5 285.5 L535.5 285.5" fill="none" stroke="#8c3e3e" stroke-width="1"/>
<path d="M535.5 285.5 L602.5 285.5" fill="none" stroke="#558d55" stroke-width="1"/>
<path d="M530.5 291.5 L535.5 291.5" fill="none" stroke="#8c3e3e" stroke-width="1"/>
<path d="M535.5 291.5 L602.5 291.5" fill="none" stroke="#558d55" stroke-width="1"/>
<path d="M530.5 298.5 L535.5 298.5" fill="none" stroke="#8c3e3e" stroke-width="1"/>
<path d="M535.5 298.5 L602.5 298.5" fill="none" stroke="#558d55" stroke-width="1"/>
<path d="M530.5 304.5 L535.5 304.5" fill="none" stroke="#8c3e3e" stroke-width="1"/>
<path d="M535.5 304.5 L602.5 304.5" fill="none" stroke="#558d55" stroke-width="1"/>
<path d="M530.5 311.5 L535.5 311.5" fill="none" stroke="#8c3e3e" stroke-width="1"/>
<path d="M535.5 311.5 L602.5 311.5" fill="none" stroke="#558d55" stroke-width="1"/>
<path d="M602.5 206.5 L581.5 206.5 L581.5 193.5 L568.5 193.5 L568.5 202.5" fill="none" stroke="#558d55" stroke-width="1"/>
<path d="M563.5 200.5 L573.5 200.5" fill="none" stroke="#8c3e3e" stroke-width="1"/>
<path d="M602.5 318.5 L555.5 318.5 L555.5 337.5" fill="none" stroke="#558d55" stroke-width="1"/>
<path d="M551.5 332.5 L555.5 337.5 L558.5 332.5" fill="none" stroke="#8c3e3e" stroke-width="1"/>
<path d="M602.5 324.5 L568.5 324.5 L568.5 336.5" fill="none" stroke="#558d55" stroke-width="1"/>
<path d="M564.5 332.5 L568.5 336.5 L572.5 332.5" fill="none" stroke="#8c3e3e" stroke-width="1"/>
<circle cx="568.4" cy="336.5" r="1.6" fill="#8c3e3e"/>
<path d="M602.5 331.5 L581.5 331.5 L581.5 337.5" fill="none" stroke="#558d55" stroke-width="1"/>
<path d="M576.5 337.5 L586.5 337.5" fill="none" stroke="#8c3e3e" stroke-width="1"/>
<rect x="591" y="200" width="19" height="137" fill="none" stroke="#8c3e3e" stroke-width="2"/>
<circle cx="605.5" cy="331.5" r="3.2" fill="#fff" stroke="#8c3e3e" stroke-width="1"/>
<rect x="604" y="327.2" width="3" height="1.6" fill="#8c3e3e"/>
<text x="597" y="331.6" font-size="6.6" font-family="Liberation Mono" fill="#7c7c7c" textLength="4" lengthAdjust="spacingAndGlyphs">1</text>
<circle cx="605.5" cy="324.5" r="3.2" fill="#fff" stroke="#8c3e3e" stroke-width="1"/>
<rect x="604" y="320.7" width="3" height="1.6" fill="#8c3e3e"/>
<text x="597" y="324.6" font-size="6.6" font-family="Liberation Mono" fill="#7c7c7c" textLength="4" lengthAdjust="spacingAndGlyphs">2</text>
<circle cx="605.5" cy="318.5" r="3.2" fill="#fff" stroke="#8c3e3e" stroke-width="1"/>
<rect x="604" y="314.2" width="3" height="1.6" fill="#8c3e3e"/>
<text x="597" y="318.6" font-size="6.6" font-family="Liberation Mono" fill="#7c7c7c" textLength="4" lengthAdjust="spacingAndGlyphs">3</text>
<circle cx="605.5" cy="311.5" r="3.2" fill="#fff" stroke="#8c3e3e" stroke-width="1"/>
<rect x="604" y="307.2" width="3" height="1.6" fill="#8c3e3e"/>
<text x="597" y="311.6" font-size="6.6" font-family="Liberation Mono" fill="#7c7c7c" textLength="4" lengthAdjust="spacingAndGlyphs">4</text>
<circle cx="605.5" cy="304.5" r="3.2" fill="#fff" stroke="#8c3e3e" stroke-width="1"/>
<rect x="604" y="300.7" width="3" height="1.6" fill="#8c3e3e"/>
<text x="597" y="304.6" font-size="6.6" font-family="Liberation Mono" fill="#7c7c7c" textLength="4" lengthAdjust="spacingAndGlyphs">5</text>
<circle cx="605.5" cy="298.5" r="3.2" fill="#fff" stroke="#8c3e3e" stroke-width="1"/>
<rect x="604" y="294.2" width="3" height="1.6" fill="#8c3e3e"/>
<text x="597" y="298.6" font-size="6.6" font-family="Liberation Mono" fill="#7c7c7c" textLength="4" lengthAdjust="spacingAndGlyphs">6</text>
<circle cx="605.5" cy="291.5" r="3.2" fill="#fff" stroke="#8c3e3e" stroke-width="1"/>
<rect x="604" y="287.7" width="3" height="1.6" fill="#8c3e3e"/>
<text x="597" y="291.6" font-size="6.6" font-family="Liberation Mono" fill="#7c7c7c" textLength="4" lengthAdjust="spacingAndGlyphs">7</text>
<circle cx="605.5" cy="285.5" r="3.2" fill="#fff" stroke="#8c3e3e" stroke-width="1"/>
<rect x="604" y="281.2" width="3" height="1.6" fill="#8c3e3e"/>
<text x="597" y="285.6" font-size="6.6" font-family="Liberation Mono" fill="#7c7c7c" textLength="4" lengthAdjust="spacingAndGlyphs">8</text>
<circle cx="605.5" cy="278.5" r="3.2" fill="#fff" stroke="#8c3e3e" stroke-width="1"/>
<rect x="604" y="274.7" width="3" height="1.6" fill="#8c3e3e"/>
<text x="597" y="278.6" font-size="6.6" font-family="Liberation Mono" fill="#7c7c7c" textLength="4" lengthAdjust="spacingAndGlyphs">9</text>
<circle cx="605.5" cy="272.5" r="3.2" fill="#fff" stroke="#8c3e3e" stroke-width="1"/>
<rect x="604" y="268.2" width="3" height="1.6" fill="#8c3e3e"/>
<text x="593.2" y="272.6" font-size="6.6" font-family="Liberation Mono" fill="#7c7c7c" textLength="8" lengthAdjust="spacingAndGlyphs">10</text>
<circle cx="605.5" cy="265.5" r="3.2" fill="#fff" stroke="#8c3e3e" stroke-width="1"/>
<rect x="604" y="261.7" width="3" height="1.6" fill="#8c3e3e"/>
<text x="593.2" y="265.6" font-size="6.6" font-family="Liberation Mono" fill="#7c7c7c" textLength="8" lengthAdjust="spacingAndGlyphs">11</text>
<circle cx="605.5" cy="259.5" r="3.2" fill="#fff" stroke="#8c3e3e" stroke-width="1"/>
<rect x="604" y="255.2" width="3" height="1.6" fill="#8c3e3e"/>
<text x="593.2" y="259.6" font-size="6.6" font-family="Liberation Mono" fill="#7c7c7c" textLength="8" lengthAdjust="spacingAndGlyphs">12</text>
<circle cx="605.5" cy="252.5" r="3.2" fill="#fff" stroke="#8c3e3e" stroke-width="1"/>
<rect x="604" y="248.7" width="3" height="1.6" fill="#8c3e3e"/>
<text x="593.2" y="252.6" font-size="6.6" font-family="Liberation Mono" fill="#7c7c7c" textLength="8" lengthAdjust="spacingAndGlyphs">13</text>
<circle cx="605.5" cy="246.5" r="3.2" fill="#fff" stroke="#8c3e3e" stroke-width="1"/>
<rect x="604" y="242.2" width="3" height="1.6" fill="#8c3e3e"/>
<text x="593.2" y="246.6" font-size="6.6" font-family="Liberation Mono" fill="#7c7c7c" textLength="8" lengthAdjust="spacingAndGlyphs">14</text>
<circle cx="605.5" cy="239.5" r="3.2" fill="#fff" stroke="#8c3e3e" stroke-width="1"/>
<rect x="604" y="235.7" width="3" height="1.6" fill="#8c3e3e"/>
<text x="593.2" y="239.6" font-size="6.6" font-family="Liberation Mono" fill="#7c7c7c" textLength="8" lengthAdjust="spacingAndGlyphs">15</text>
<circle cx="605.5" cy="233.5" r="3.2" fill="#fff" stroke="#8c3e3e" stroke-width="1"/>
<rect x="604" y="229.2" width="3" height="1.6" fill="#8c3e3e"/>
<text x="593.2" y="233.6" font-size="6.6" font-family="Liberation Mono" fill="#7c7c7c" textLength="8" lengthAdjust="spacingAndGlyphs">16</text>
<circle cx="605.5" cy="226.5" r="3.2" fill="#fff" stroke="#8c3e3e" stroke-width="1"/>
<rect x="604" y="222.2" width="3" height="1.6" fill="#8c3e3e"/>
<text x="593.2" y="226.6" font-size="6.6" font-family="Liberation Mono" fill="#7c7c7c" textLength="8" lengthAdjust="spacingAndGlyphs">17</text>
<circle cx="605.5" cy="219.5" r="3.2" fill="#fff" stroke="#8c3e3e" stroke-width="1"/>
<rect x="604" y="215.7" width="3" height="1.6" fill="#8c3e3e"/>
<text x="593.2" y="219.6" font-size="6.6" font-family="Liberation Mono" fill="#7c7c7c" textLength="8" lengthAdjust="spacingAndGlyphs">18</text>
<circle cx="605.5" cy="213.5" r="3.2" fill="#fff" stroke="#8c3e3e" stroke-width="1"/>
<rect x="604" y="209.2" width="3" height="1.6" fill="#8c3e3e"/>
<text x="593.2" y="213.6" font-size="6.6" font-family="Liberation Mono" fill="#7c7c7c" textLength="8" lengthAdjust="spacingAndGlyphs">19</text>
<circle cx="605.5" cy="206.5" r="3.2" fill="#fff" stroke="#8c3e3e" stroke-width="1"/>
<text x="593.2" y="206.6" font-size="6.6" font-family="Liberation Mono" fill="#7c7c7c" textLength="8" lengthAdjust="spacingAndGlyphs">20</text>
<path d="M589.3 194.7 L592.3 194.7 M590.8 193.2 L590.8 196.2" stroke="#9a9a9a" stroke-width="0.9"/>
<text x="590" y="195.2" font-size="6.5" font-family="Liberation Mono" fill="#888888" textLength="9" lengthAdjust="spacingAndGlyphs">J1</text>
<path d="M398.5 239.5 L457.5 239.5" fill="none" stroke="#558d55" stroke-width="1"/>
<rect x="410.0" y="238.0" width="3" height="3" fill="#3a9a3a"/>
<rect x="442.0" y="238.0" width="3" height="3" fill="#3a9a3a"/>
<path d="M411.5 239.5 L411.5 265.5" fill="none" stroke="#558d55" stroke-width="1"/>
<path d="M398.5 239.5 L398.5 242.5" fill="none" stroke="#8c3e3e" stroke-width="1"/>
<rect x="393.8" y="242.2" width="9.2" height="2.6" fill="#8c3e3e"/>
<path d="M393.8 246.4 Q398.4 245.6 403 246.4 L403 249 L393.8 249 Z" fill="#8c3e3e"/>
<path d="M398.5 247.5 L398.5 259.5" fill="none" stroke="#8c3e3e" stroke-width="1"/>
<path d="M393.5 259.5 L403.5 259.5" fill="none" stroke="#8c3e3e" stroke-width="1"/>
<path d="M376.5 242.5 L379.5 242.5 M378.0 241.0 L378.0 244.0" stroke="#9a9a9a" stroke-width="0.9"/>
<text x="377.2" y="243" font-size="6.5" font-family="Liberation Mono" fill="#888888" textLength="9" lengthAdjust="spacingAndGlyphs">C4</text>
<path d="M374.40000000000003 250.6 L377.40000000000003 250.6 M375.90000000000003 249.1 L375.90000000000003 252.1" stroke="#9a9a9a" stroke-width="0.9"/>
<text x="375.1" y="251.1" font-size="6.5" font-family="Liberation Mono" fill="#888888" textLength="14" lengthAdjust="spacingAndGlyphs">27p</text>
<path d="M443.5 239.5 L443.5 242.5" fill="none" stroke="#8c3e3e" stroke-width="1"/>
<rect x="439" y="242.2" width="9.2" height="2.6" fill="#8c3e3e"/>
<path d="M439 246.4 Q443.6 245.6 448.2 246.4 L448.2 249 L439 249 Z" fill="#8c3e3e"/>
<path d="M443.5 247.5 L443.5 259.5" fill="none" stroke="#8c3e3e" stroke-width="1"/>
<path d="M438.5 259.5 L449.5 259.5" fill="none" stroke="#8c3e3e" stroke-width="1"/>
<path d="M430.7 254.5 L433.7 254.5 M432.2 253.0 L432.2 256.0" stroke="#9a9a9a" stroke-width="0.9"/>
<text x="431.4" y="255" font-size="6.5" font-family="Liberation Mono" fill="#888888" textLength="8" lengthAdjust="spacingAndGlyphs">C5</text>
<path d="M449.0 255.8 L452.0 255.8 M450.5 254.3 L450.5 257.3" stroke="#9a9a9a" stroke-width="0.9"/>
<text x="449.7" y="256.3" font-size="6.5" font-family="Liberation Mono" fill="#888888" textLength="13.5" lengthAdjust="spacingAndGlyphs">27p</text>
<path d="M418 232 L418 247" fill="none" stroke="#8c3e3e" stroke-width="2"/>
<rect x="421.5" y="233" width="6" height="13.4" fill="#fff" stroke="#8c3e3e" stroke-width="2"/>
<path d="M430 232 L430 247" fill="none" stroke="#8c3e3e" stroke-width="2"/>
<path d="M422.5 239.5 L426.5 239.5" fill="none" stroke="#8c3e3e" stroke-width="1"/>
<path d="M420.8 229.9 L423.8 229.9 M422.3 228.4 L422.3 231.4" stroke="#9a9a9a" stroke-width="0.9"/>
<text x="421.5" y="230.4" font-size="6.5" font-family="Liberation Mono" fill="#888888" textLength="8.5" lengthAdjust="spacingAndGlyphs">Q1</text>
<text x="413.8" y="240.2" font-size="5.5" font-family="Liberation Mono" fill="#888888" textLength="3.5" lengthAdjust="spacingAndGlyphs">1</text>
<text x="433.5" y="241.5" font-size="5.5" font-family="Liberation Mono" fill="#888888" textLength="3.5" lengthAdjust="spacingAndGlyphs">2</text>
<path d="M345.5 409.5 L384.5 409.5" fill="none" stroke="#558d55" stroke-width="1"/>
<rect x="344.0" y="408.0" width="3" height="3" fill="#3a9a3a"/>
<rect x="364.0" y="408.0" width="3" height="3" fill="#3a9a3a"/>
<path d="M424.5 409.5 L463.5 409.5" fill="none" stroke="#558d55" stroke-width="1"/>
<rect x="436.0" y="408.0" width="3" height="3" fill="#3a9a3a"/>
<rect x="462.0" y="408.0" width="3" height="3" fill="#3a9a3a"/>
<path d="M345.5 393.2 L347.3 396.7 L343.7 396.7 Z" fill="#8c3e3e"/>
<path d="M342.3 399.5 L344.3 396.4" fill="none" stroke="#8c3e3e" stroke-width="1.1"/>
<path d="M348.7 399.5 L346.7 396.4" fill="none" stroke="#8c3e3e" stroke-width="1.1"/>
<path d="M345.5 393.2 L345.5 399.7" fill="none" stroke="#8c3e3e" stroke-width="1.1"/>
<path d="M345.5 399.5 L345.5 409.5" fill="none" stroke="#558d55" stroke-width="1"/>
<path d="M317.5 403.5 L320.5 403.5 M319.0 402.0 L319.0 405.0" stroke="#9a9a9a" stroke-width="0.9"/>
<text x="318.2" y="404" font-size="6.5" font-family="Liberation Mono" fill="#888888" textLength="17.8" lengthAdjust="spacingAndGlyphs">+12V</text>
<path d="M463.4 395.5 L465.2 399.0 L461.59999999999997 399.0 Z" fill="#8c3e3e"/>
<path d="M460.2 401.8 L462.2 398.7" fill="none" stroke="#8c3e3e" stroke-width="1.1"/>
<path d="M466.59999999999997 401.8 L464.59999999999997 398.7" fill="none" stroke="#8c3e3e" stroke-width="1.1"/>
<path d="M463.4 395.5 L463.4 402.0" fill="none" stroke="#8c3e3e" stroke-width="1.1"/>
<path d="M463.5 401.5 L463.5 409.5" fill="none" stroke="#558d55" stroke-width="1"/>
<path d="M467.90000000000003 402.6 L470.90000000000003 402.6 M469.40000000000003 401.1 L469.40000000000003 404.1" stroke="#9a9a9a" stroke-width="0.9"/>
<text x="468.6" y="403.1" font-size="6.5" font-family="Liberation Mono" fill="#888888" textLength="13.2" lengthAdjust="spacingAndGlyphs">VCC</text>
<rect x="385" y="402" width="39.5" height="20" fill="none" stroke="#8c3e3e" stroke-width="2"/>
<path d="M384.7 394.5 L387.7 394.5 M386.2 393.0 L386.2 396.0" stroke="#9a9a9a" stroke-width="0.9"/>
<text x="385.4" y="395" font-size="6.5" font-family="Liberation Mono" fill="#888888" textLength="7" lengthAdjust="spacingAndGlyphs">U1</text>
<path d="M384.7 400.3 L387.7 400.3 M386.2 398.8 L386.2 401.8" stroke="#9a9a9a" stroke-width="0.9"/>
<text x="385.4" y="400.8" font-size="6.5" font-family="Liberation Mono" fill="#888888" textLength="20" lengthAdjust="spacingAndGlyphs">78L05</text>
<text x="391" y="411.6" font-size="6.5" font-family="Liberation Mono" fill="#888888" textLength="6" lengthAdjust="spacingAndGlyphs">VI</text>
<text x="411" y="411.6" font-size="6.5" font-family="Liberation Mono" fill="#888888" textLength="6.7" lengthAdjust="spacingAndGlyphs">VO</text>
<text x="399.5" y="420.6" font-size="6.5" font-family="Liberation Mono" fill="#888888" textLength="10.5" lengthAdjust="spacingAndGlyphs">GND</text>
<path d="M402.5 409.5 L406.5 409.5" fill="none" stroke="#8c3e3e" stroke-width="1"/>
<path d="M404.5 407.5 L404.5 411.5" fill="none" stroke="#8c3e3e" stroke-width="1"/>
<text x="381" y="408" font-size="5.5" font-family="Liberation Mono" fill="#888888" textLength="3.5" lengthAdjust="spacingAndGlyphs">3</text>
<text x="425.3" y="407" font-size="5.5" font-family="Liberation Mono" fill="#888888" textLength="3.5" lengthAdjust="spacingAndGlyphs">1</text>
<text x="401" y="430" font-size="5.5" font-family="Liberation Mono" fill="#888888" textLength="3.5" lengthAdjust="spacingAndGlyphs">2</text>
<path d="M404.5 422.5 L404.5 442.5" fill="none" stroke="#558d55" stroke-width="1"/>
<path d="M399.5 442.5 L409.5 442.5" fill="none" stroke="#8c3e3e" stroke-width="1"/>
<path d="M345.5 409.5 L345.5 421.5" fill="none" stroke="#558d55" stroke-width="1"/>
<rect x="341.2" y="421.8" width="8.6" height="2.6" fill="#fff" stroke="#8c3e3e" stroke-width="1"/>
<rect x="341" y="427.3" width="9" height="2.4" fill="#8c3e3e"/>
<path d="M345.5 429.5 L345.5 442.5" fill="none" stroke="#8c3e3e" stroke-width="1"/>
<path d="M340.5 442.5 L350.5 442.5" fill="none" stroke="#8c3e3e" stroke-width="1"/>
<path d="M341.5 418.5 L344.5 418.5" fill="none" stroke="#8c3e3e" stroke-width="1"/>
<path d="M342.5 416.5 L342.5 420.5" fill="none" stroke="#8c3e3e" stroke-width="1"/>
<path d="M350.5 427.1 L353.5 427.1 M352.0 425.6 L352.0 428.6" stroke="#9a9a9a" stroke-width="0.9"/>
<text x="351.2" y="427.6" font-size="6.5" font-family="Liberation Mono" fill="#888888" textLength="7.6" lengthAdjust="spacingAndGlyphs">C1</text>
<path d="M347.3 434.7 L350.3 434.7 M348.8 433.2 L348.8 436.2" stroke="#9a9a9a" stroke-width="0.9"/>
<text x="348" y="435.2" font-size="6.5" font-family="Liberation Mono" fill="#888888" textLength="11.4" lengthAdjust="spacingAndGlyphs">10u</text>
<path d="M365.5 409.5 L365.5 422.5" fill="none" stroke="#558d55" stroke-width="1"/>
<rect x="360.4" y="423" width="10.2" height="5.7" fill="#8c3e3e"/>
<path d="M365.5 428.5 L365.5 442.5" fill="none" stroke="#8c3e3e" stroke-width="1"/>
<path d="M360.5 442.5 L370.5 442.5" fill="none" stroke="#8c3e3e" stroke-width="1"/>
<path d="M368.90000000000003 421.4 L371.90000000000003 421.4 M370.40000000000003 419.9 L370.40000000000003 422.9" stroke="#9a9a9a" stroke-width="0.9"/>
<text x="369.6" y="421.9" font-size="6.5" font-family="Liberation Mono" fill="#888888" textLength="7.6" lengthAdjust="spacingAndGlyphs">C3</text>
<path d="M368.3 434.7 L371.3 434.7 M369.8 433.2 L369.8 436.2" stroke="#9a9a9a" stroke-width="0.9"/>
<text x="369" y="435.2" font-size="6.5" font-family="Liberation Mono" fill="#888888" textLength="12" lengthAdjust="spacingAndGlyphs">10n</text>
<path d="M437.5 409.5 L437.5 423.5" fill="none" stroke="#558d55" stroke-width="1"/>
<rect x="432.3" y="423.4" width="10.5" height="4.8" fill="#8c3e3e"/>
<path d="M437.5 428.5 L437.5 442.5" fill="none" stroke="#8c3e3e" stroke-width="1"/>
<path d="M432.5 442.5 L442.5 442.5" fill="none" stroke="#8c3e3e" stroke-width="1"/>
<path d="M440.7 421.5 L443.7 421.5 M442.2 420.0 L442.2 423.0" stroke="#9a9a9a" stroke-width="0.9"/>
<text x="441.4" y="422" font-size="6.5" font-family="Liberation Mono" fill="#888888" textLength="7.6" lengthAdjust="spacingAndGlyphs">C4</text>
<path d="M440.3 434.7 L443.3 434.7 M441.8 433.2 L441.8 436.2" stroke="#9a9a9a" stroke-width="0.9"/>
<text x="441" y="435.2" font-size="6.5" font-family="Liberation Mono" fill="#888888" textLength="12" lengthAdjust="spacingAndGlyphs">10n</text>
<path d="M463.5 409.5 L463.5 422.5" fill="none" stroke="#558d55" stroke-width="1"/>
<rect x="459.4" y="422.4" width="8.2" height="2.2" fill="#fff" stroke="#8c3e3e" stroke-width="1"/>
<rect x="459.2" y="427.1" width="8.5" height="2.3" fill="#8c3e3e"/>
<path d="M463.5 429.5 L463.5 442.5" fill="none" stroke="#8c3e3e" stroke-width="1"/>
<path d="M458.5 442.5 L468.5 442.5" fill="none" stroke="#8c3e3e" stroke-width="1"/>
<path d="M459.5 419.5 L462.5 419.5" fill="none" stroke="#8c3e3e" stroke-width="1"/>
<path d="M460.5 418.5 L460.5 420.5" fill="none" stroke="#8c3e3e" stroke-width="1"/>
<path d="M468.6 427.1 L471.6 427.1 M470.1 425.6 L470.1 428.6" stroke="#9a9a9a" stroke-width="0.9"/>
<text x="469.3" y="427.6" font-size="6.5" font-family="Liberation Mono" fill="#888888" textLength="7.7" lengthAdjust="spacingAndGlyphs">C2</text>
<path d="M465.1 434.1 L468.1 434.1 M466.6 432.6 L466.6 435.6" stroke="#9a9a9a" stroke-width="0.9"/>
<text x="465.8" y="434.6" font-size="6.5" font-family="Liberation Mono" fill="#888888" textLength="11.8" lengthAdjust="spacingAndGlyphs">10u</text>
</svg><!--/SCH-->
<svg class="a" style="left:0;top:0" width="789" height="534"><text x="384.5" y="529.4" font-family="Liberation Serif" font-style="italic" font-size="17.5" fill="#fff" stroke="#333" stroke-width="1.6" paint-order="stroke" textLength="20" lengthAdjust="spacingAndGlyphs">SA</text></svg>
</body></html>
